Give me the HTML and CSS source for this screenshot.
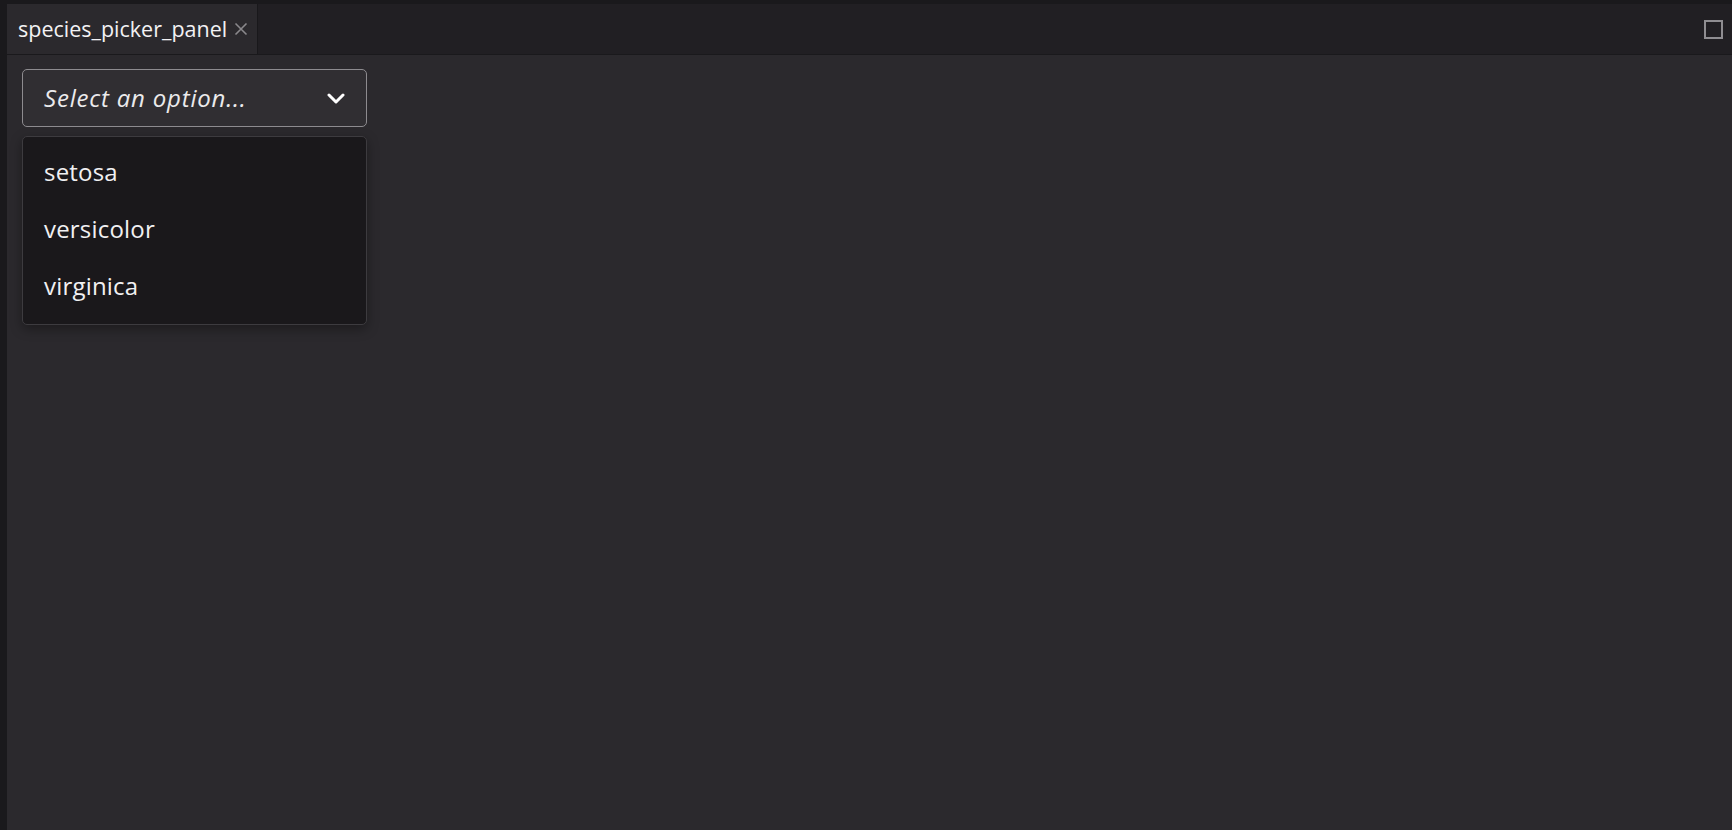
FILE: index.html
```html
<!DOCTYPE html>
<html lang="en">
<head>
<meta charset="utf-8">
<title>species_picker_panel</title>
<link rel="stylesheet" href="styles.css">
</head>
<body>
<div class="app">
  <div class="tabbar">
    <div class="tab">
      <span class="tab-title">species_picker_panel</span>
      <svg class="tab-close" width="14" height="14" viewBox="0 0 14 14"><path d="M1.5 1.5 L12.5 12.5 M12.5 1.5 L1.5 12.5" stroke="currentColor" stroke-width="1.6" fill="none"/></svg>
    </div>
    <div class="tabbar-fill"></div>
    <svg class="maximize" width="19" height="19" viewBox="0 0 19 19"><rect x="1" y="1" width="17" height="17" stroke="currentColor" stroke-width="2" fill="none"/></svg>
  </div>
  <div class="content">
    <div class="picker">
      <div class="select">
        <span class="placeholder">Select an option...</span>
        <svg class="chevron" width="18" height="11" viewBox="0 0 18 11"><path d="M2 2 L9 9 L16 2" stroke="currentColor" stroke-width="3" fill="none" stroke-linecap="round" stroke-linejoin="round"/></svg>
      </div>
      <ul class="menu">
        <li class="option">setosa</li>
        <li class="option">versicolor</li>
        <li class="option">virginica</li>
      </ul>
    </div>
  </div>
</div>
</body>
</html>
```

FILE: styles.css
```css
html, body {
  margin: 0;
  padding: 0;
  height: 100%;
  background: #1a191c;
  font-family: "Open Sans", "Noto Sans", sans-serif;
  color: #f1f0f2;
}

.app {
  display: flex;
  flex-direction: column;
  height: 100vh;
  padding: 4px 0 0 7px;
  box-sizing: border-box;
}

.tabbar {
  display: flex;
  align-items: stretch;
  height: 50px;
  background: #211f23;
  border-bottom: 1px solid #1a191c;
}

.tab {
  display: flex;
  align-items: center;
  gap: 7px;
  width: 251px;
  padding-left: 11px;
  box-sizing: border-box;
  background: #2b292d;
  border-right: 1px solid #19181b;
}

.tab-title {
  font-size: 21.5px;
  font-weight: 500;
  color: #f3f2f4;
  white-space: nowrap;
  margin-top: -2px;
}

.tab-close {
  flex: none;
  color: #8a888c;
}

.tabbar-fill {
  flex: 1;
}

.maximize {
  align-self: flex-start;
  margin: 16px 9px 0 0;
  color: #8f8d91;
}

.content {
  flex: 1;
  background: #2b292d;
  padding: 14px 15px;
}

.picker {
  position: relative;
  width: 345px;
}

.select {
  display: flex;
  align-items: center;
  justify-content: space-between;
  height: 58px;
  box-sizing: border-box;
  padding: 0 21px 0 21px;
  background: #302e32;
  border: 1px solid #8d8b8f;
  border-radius: 5px;
}

.placeholder {
  font-style: italic;
  font-size: 24px;
  font-weight: 500;
  color: #ebeaec;
  letter-spacing: 0.8px;
  margin-top: -2px;
}

.chevron {
  color: #ffffff;
}

.menu {
  position: absolute;
  top: 67px;
  left: 0;
  right: 0;
  margin: 0;
  padding: 8px 0;
  list-style: none;
  background: #1a181b;
  border: 1px solid #3d3b3f;
  border-radius: 5px;
  box-shadow: 0 4px 12px rgba(0, 0, 0, 0.35);
}

.option {
  height: 57px;
  box-sizing: border-box;
  display: flex;
  align-items: center;
  padding: 0 0 4px 21px;
  font-size: 24px;
  font-weight: 500;
  letter-spacing: 0.2px;
  color: #f1f0f2;
}
```
